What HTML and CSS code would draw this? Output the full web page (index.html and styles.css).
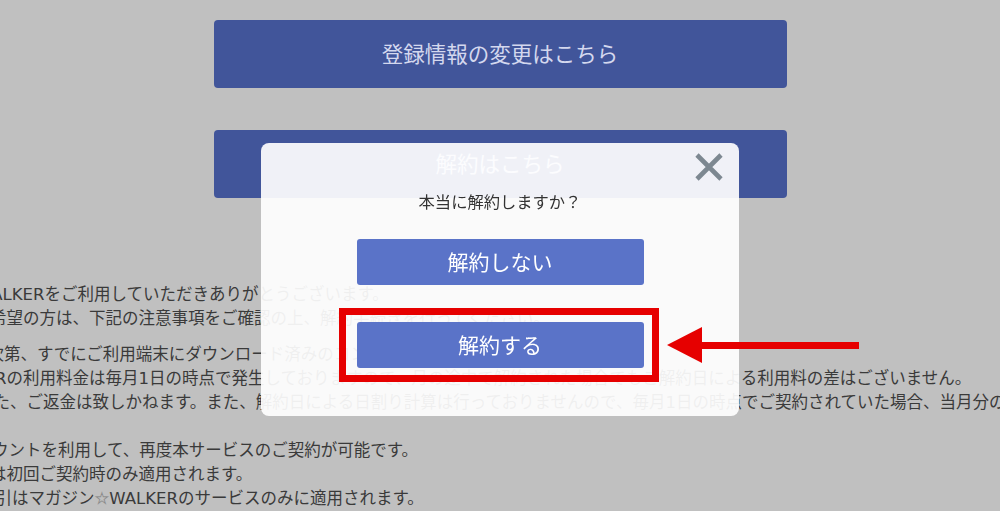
FILE: index.html
```html
<!DOCTYPE html>
<html lang="ja">
<head>
<meta charset="utf-8">
<title>解約</title>
<link rel="stylesheet" href="styles.css">
</head>
<body>
<main class="page">
  <div class="actions">
    <a class="big-btn">登録情報の変更はこちら</a>
    <a class="big-btn">解約はこちら</a>
  </div>
  <section class="notes">
    <div class="para">
      <p class="ln l1">マガジン<span class="star">☆</span>WALKERをご利用していただきありがとうございます。</p>
      <p class="ln l2">解約をご希望の方は、下記の注意事項をご確認の上、解約手続きを行ってください。</p>
    </div>
    <div class="para">
      <p class="ln l3">解約手続き完了次第、すでにご利用端末にダウンロード済みのコンテンツも閲覧できなくなります。</p>
      <p class="ln l4">マガジン<span class="star">☆</span>WALKERの利用料金は毎月1日の時点で発生しておりますので、月の途中で解約された場合でもご解約日による利用料の差はございません。</p>
      <p class="ln l5">いた、ご返金は致しかねます。また、解約日による日割り計算は行っておりませんので、毎月1日の時点でご契約されていた場合、当月分の料金が発生いたします。</p>
    </div>
    <div class="para">
      <p class="ln l6">同じアカウントを利用して、再度本サービスのご契約が可能です。</p>
      <p class="ln l7">無料期間は初回ご契約時のみ適用されます。</p>
      <p class="ln l8">割引はマガジン<span class="star">☆</span>WALKERのサービスのみに適用されます。</p>
    </div>
  </section>
</main>

<div class="modal">
  <button class="close" aria-label="閉じる">
    <svg width="28" height="28" viewBox="0 0 28 28"><path d="M2 2 L26 26 M26 2 L2 26" stroke="#7d8891" stroke-width="4.6" fill="none"/></svg>
  </button>
  <p class="modal-title">本当に解約しますか？</p>
  <div class="modal-actions">
    <a class="m-btn">解約しない</a>
    <a class="m-btn">解約する</a>
  </div>
</div>

<div class="highlight"></div>
<svg class="arrow" width="210" height="50" viewBox="660 320 210 50">
  <polygon points="667,345 702,327 702,363" fill="#e60000"/>
  <rect x="700" y="342" width="159" height="7" fill="#e60000"/>
</svg>
</body>
</html>
```
FILE: styles.css
```css
* { box-sizing: border-box; }
html, body { margin: 0; padding: 0; }
body {
  background: #c0c0c0;
  width: 1000px;
  height: 511px;
  overflow: hidden;
  font-family: "Noto Sans CJK JP", sans-serif;
  color: #383838;
}
.page { width: 1000px; }
.actions {
  width: 573px;
  margin: 0 auto;
  padding-top: 20px;
  display: flex;
  flex-direction: column;
  gap: 42px;
}
.big-btn {
  display: flex;
  align-items: center;
  justify-content: center;
  height: 68px;
  background: #41559a;
  border-radius: 4px;
  color: #d4d8ee;
  font-size: 21.5px;
  padding-bottom: 4px;
}
.notes {
  margin-top: 85px;
  font-family: "DejaVu Sans", "Noto Sans CJK JP", sans-serif;
  font-size: 16.5px;
  line-height: 24px;
  color: #3a3a3a;
}
.star {
  color: #ececec;
  -webkit-text-stroke: 0.5px #8c8c8c;
}
.para { margin-bottom: 12px; }
.para:nth-child(2) { margin-bottom: 24px; }
.ln { margin: 0; white-space: nowrap; }
.l1 { margin-left: -105px; }
.l2 { margin-left: -76px; }
.l3 { margin-left: -128px; }
.l4 { margin-left: -143px; }
.l5 { margin-left: -23px; }
.l6 { margin-left: -74px; }
.l7 { margin-left: -76px; }
.l8 { margin-left: -21px; }

.modal {
  position: fixed;
  left: 261px;
  top: 143px;
  width: 478px;
  height: 273px;
  background: rgba(255, 255, 255, 0.92);
  border-radius: 8px;
  display: flex;
  flex-direction: column;
  align-items: center;
  padding-top: 46px;
}
.close {
  position: absolute;
  right: 16px;
  top: 10px;
  width: 28px;
  height: 28px;
  padding: 0;
  border: 0;
  background: none;
  display: block;
}
.close svg { display: block; }
.modal-title {
  margin: 0;
  font-size: 16.3px;
  line-height: 24px;
  color: #333;
}
.modal-actions {
  margin-top: 26px;
  display: flex;
  flex-direction: column;
  gap: 37px;
}
.m-btn {
  display: flex;
  align-items: center;
  justify-content: center;
  width: 287px;
  height: 46px;
  background: #5a73c8;
  border-radius: 3px;
  color: #fff;
  font-size: 21px;
  padding-bottom: 2px;
}
.highlight {
  position: fixed;
  left: 339px;
  top: 308px;
  width: 320px;
  height: 74px;
  border: 7px solid #e60000;
}
.arrow {
  position: fixed;
  left: 660px;
  top: 320px;
}
```
